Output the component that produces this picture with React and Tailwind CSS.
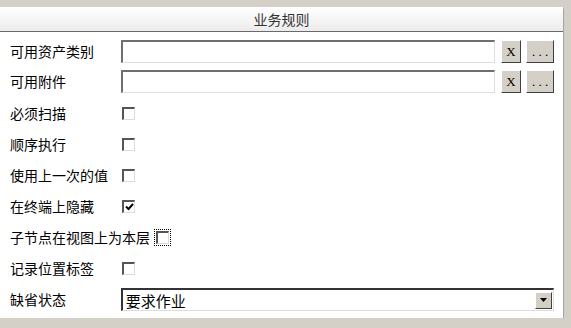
const font = { fontFamily: '"Noto Sans CJK SC", "Liberation Sans", sans-serif' };

function Sunken({ className = "", children }) {
  return (
    <div className={`border-t-2 border-l-2 border-t-[#6f6f6f] border-l-[#6f6f6f] border-b border-r border-b-[#e0ddd6] border-r-[#e0ddd6] bg-white ${className}`}>
      {children}
    </div>
  );
}

function Check({ checked, focus }) {
  return (
    <div className={focus ? "p-[1px] border border-dotted border-black" : ""}>
      <div className="w-[13px] h-[13px] border-t-2 border-l-2 border-t-[#555] border-l-[#555] border-b border-r border-b-[#dcdcdc] border-r-[#dcdcdc] bg-white flex items-center justify-center">
        {checked && (
          <svg width="9" height="8" viewBox="0 0 9 8">
            <path d="M1 3.5 L3.5 6 L8 1" stroke="#000" strokeWidth="2" fill="none" />
          </svg>
        )}
      </div>
    </div>
  );
}

function Btn({ children, w }) {
  return (
    <div className={`${w} h-[23px] bg-[#d4d0c8] border border-t-white border-l-white border-b-[#404040] border-r-[#404040] flex items-center justify-center text-[13px] text-black`} style={{ fontFamily: '"Liberation Serif", serif' }}>
      {children}
    </div>
  );
}

export default function App() {
  const checks = [
    ["必须扫描", false],
    ["顺序执行", false],
    ["使用上一次的值", false],
    ["在终端上隐藏", true],
  ];
  return (
    <div className="w-[571px] h-[328px] bg-[#d4d0c8] pt-[7px] overflow-hidden" style={font}>
      <div className="w-[564px] h-[311px] bg-white border-r border-r-[#a8a59e] rounded-tr-[3px]">
        <div className="h-[25px] bg-gradient-to-b from-white to-[#ececec] border-b border-b-[#6a6a6a] flex items-center justify-center text-[14px] text-[#333]">
          业务规则
        </div>
        <div className="pl-[10px] pr-[9px] pt-[8px] flex flex-col text-[14px] text-black">
          <div className="flex items-center h-[23px]">
            <div className="w-[111px]">可用资产类别</div>
            <Sunken className="w-[376px] h-[23px]" />
            <div className="ml-[6px]"><Btn w="w-[20px]">X</Btn></div>
            <div className="ml-[5px]"><Btn w="w-[28px]">. . .</Btn></div>
          </div>
          <div className="flex items-center h-[23px] mt-[7px]">
            <div className="w-[111px]">可用附件</div>
            <Sunken className="w-[376px] h-[23px]" />
            <div className="ml-[6px]"><Btn w="w-[20px]">X</Btn></div>
            <div className="ml-[5px]"><Btn w="w-[28px]">. . .</Btn></div>
          </div>
          <div className="flex flex-col mt-[5px]">
            {checks.map(([label, c]) => (
              <div key={label} className="flex items-center h-[31px]">
                <div className="w-[112px]">{label}</div>
                <Check checked={c} />
              </div>
            ))}
            <div className="flex items-center h-[31px]">
              <div className="w-[144px]">子节点在视图上为本层</div>
              <Check focus />
            </div>
            <div className="flex items-center h-[31px]">
              <div className="w-[112px]">记录位置标签</div>
              <Check />
            </div>
          </div>
          <div className="flex items-center h-[23px] mt-[4px]">
            <div className="w-[111px]">缺省状态</div>
            <Sunken className="w-[434px] h-[23px] flex items-center justify-between pl-[3px] pr-[1px] border-t-[#333] border-l-[#333]">
              <span className="leading-none text-[15px]">要求作业</span>
              <div className="w-[17px] h-[17px] bg-[#d4d0c8] border border-t-white border-l-white border-b-[#404040] border-r-[#404040] flex items-center justify-center">
                <svg width="7" height="4" viewBox="0 0 7 4"><path d="M0 0 H7 L3.5 4 Z" fill="#000" /></svg>
              </div>
            </Sunken>
          </div>
        </div>
      </div>
    </div>
  );
}
